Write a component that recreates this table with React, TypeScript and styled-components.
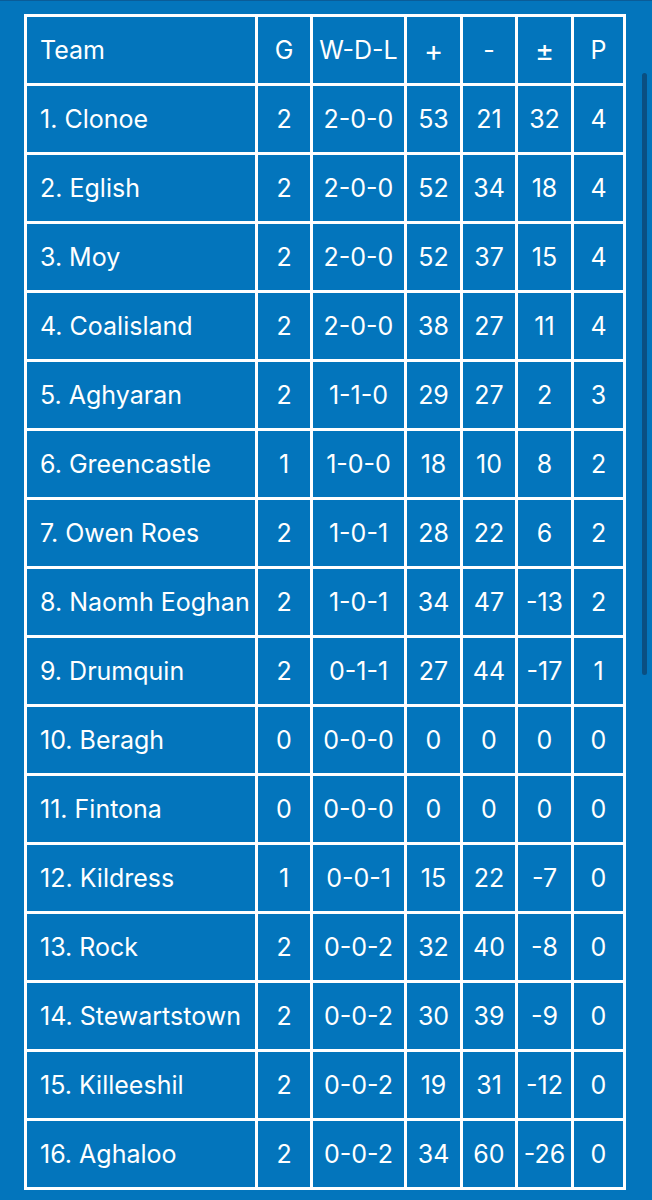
import { FC } from "react";
import styled, { createGlobalStyle } from "styled-components";

const blue = "#0375bc";

type Row = [string, number, string, number, number, number, number];

const rows: Row[] = [
  ["1. Clonoe", 2, "2-0-0", 53, 21, 32, 4],
  ["2. Eglish", 2, "2-0-0", 52, 34, 18, 4],
  ["3. Moy", 2, "2-0-0", 52, 37, 15, 4],
  ["4. Coalisland", 2, "2-0-0", 38, 27, 11, 4],
  ["5. Aghyaran", 2, "1-1-0", 29, 27, 2, 3],
  ["6. Greencastle", 1, "1-0-0", 18, 10, 8, 2],
  ["7. Owen Roes", 2, "1-0-1", 28, 22, 6, 2],
  ["8. Naomh Eoghan", 2, "1-0-1", 34, 47, -13, 2],
  ["9. Drumquin", 2, "0-1-1", 27, 44, -17, 1],
  ["10. Beragh", 0, "0-0-0", 0, 0, 0, 0],
  ["11. Fintona", 0, "0-0-0", 0, 0, 0, 0],
  ["12. Kildress", 1, "0-0-1", 15, 22, -7, 0],
  ["13. Rock", 2, "0-0-2", 32, 40, -8, 0],
  ["14. Stewartstown", 2, "0-0-2", 30, 39, -9, 0],
  ["15. Killeeshil", 2, "0-0-2", 19, 31, -12, 0],
  ["16. Aghaloo", 2, "0-0-2", 34, 60, -26, 0],
];

const widths = [228, 52, 91, 53, 52, 53, 49];
const headers = ["Team", "G", "W-D-L", "+", "-", "±", "P"];
const symbols = ["+", "±"];

const App: FC = () => {
  return (
    <Page>
      <GlobalStyle />
      <Table>
        <colgroup>
          {widths.map((w, i) => (
            <Col key={i} $w={w} />
          ))}
        </colgroup>
        <thead>
          <tr>
            {headers.map((h, i) => (
              <Cell as="th" key={h} $left={i === 0} $symbol={symbols.includes(h)}>
                {h}
              </Cell>
            ))}
          </tr>
        </thead>
        <tbody>
          {rows.map((r) => (
            <tr key={r[0]}>
              {r.map((v, i) => (
                <Cell key={i} $left={i === 0}>
                  {v}
                </Cell>
              ))}
            </tr>
          ))}
        </tbody>
      </Table>
      <ScrollThumb />
    </Page>
  );
};

export default App;

const GlobalStyle = createGlobalStyle`
  html, body {
    margin: 0;
    padding: 0;
    background: ${blue};
  }
  body {
    font-family: Inter, "Noto Sans", sans-serif;
    color: #ffffff;
  }
`;

const Page = styled.div`
  position: relative;
  width: 652px;
  height: 1200px;
  overflow: hidden;
  box-sizing: border-box;
  padding: 13px 0 0 24px;
  border-top: 1px solid #0a5c98;
`;

const Table = styled.table`
  table-layout: fixed;
  border-collapse: separate;
  border-spacing: 3px;
  background: #ffffff;
`;

const Col = styled.col<{ $w: number }>`
  width: ${(p) => p.$w}px;
`;

const Cell = styled.td<{ $left?: boolean; $symbol?: boolean }>`
  background: ${blue};
  height: 66px;
  padding: ${(p) => (p.$left ? "0 0 0 13px" : "0")};
  text-align: ${(p) => (p.$left ? "left" : "center")};
  font-size: ${(p) => (p.$symbol ? "29px" : "25px")};
  font-weight: 400;
  white-space: nowrap;
  overflow: hidden;
`;

const ScrollThumb = styled.div`
  position: absolute;
  left: 642px;
  top: 72px;
  width: 5px;
  height: 602px;
  border-radius: 3px;
  background: #0a4f82;
`;
